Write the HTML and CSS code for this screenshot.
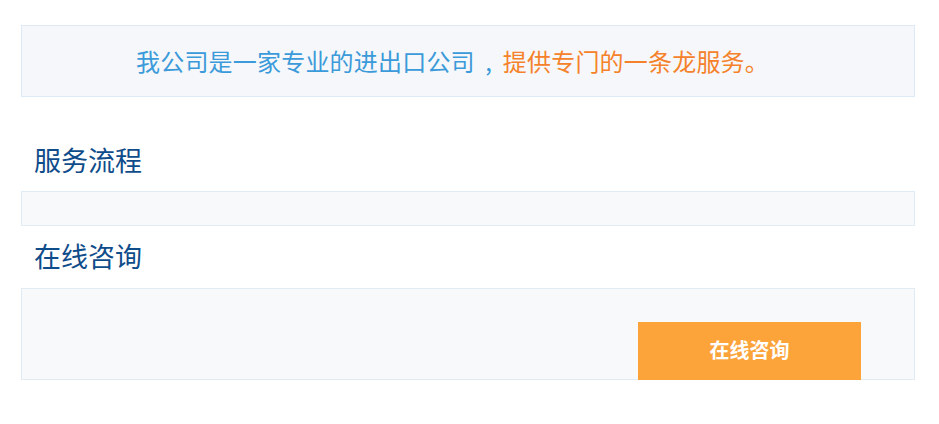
FILE: index.html
```html
<!DOCTYPE html>
<html lang="zh-CN">
<head>
    <meta charset="UTF-8">
    <meta name="viewport" content="width=device-width, initial-scale=1.0">
    <title>服务流程</title>
    <link rel="stylesheet" href="styles.css">
</head>
<body>
    <div class="page">
        <!-- Intro banner -->
        <div class="intro">
            <span class="intro-blue">我公司是一家专业的进出口公司<span class="comma">,</span></span><span class="intro-orange">提供专门的一条龙服务。</span>
        </div>

        <h2 class="section-title first">服务流程</h2>
        <div class="panel panel-flow"></div>

        <h2 class="section-title">在线咨询</h2>
        <div class="panel panel-consult">
            <button class="consult-btn">在线咨询</button>
        </div>
    </div>
</body>
</html>
```

FILE: styles.css
```css
/* General styles */
body {
    margin: 0;
    background-color: #ffffff;
    font-family: "Noto Sans CJK SC", "Noto Sans", sans-serif;
}

.page {
    width: 894px;
    margin-left: 21px;
    padding-top: 25px;
}

/* Intro banner */
.intro {
    height: 70px;
    line-height: 70px;
    background-color: #f5f7fa;
    border: 1px solid #dde9f4;
    text-align: center;
    padding-right: 31px;
    font-size: 24px;
    letter-spacing: 0.2px;
}

.intro-blue {
    color: #3b9ad9;
}

.intro-orange {
    color: #f5822a;
}

.comma {
    display: inline-block;
    width: 28px;
    text-align: center;
}

/* Section headings */
.section-title {
    margin: 12px 0 14px;
    padding-left: 13px;
    font-size: 27px;
    font-weight: normal;
    line-height: 36px;
    color: #0f4c8a;
}

.section-title.first {
    margin-top: 45px;
    margin-bottom: 13px;
}

.panel {
    background-color: #f8f9fb;
    border: 1px solid #e1ebf4;
}

.panel-flow {
    height: 33px;
}

.panel-consult {
    height: 90px;
    display: flex;
    justify-content: flex-end;
    align-items: flex-end;
}

.consult-btn {
    width: 223px;
    height: 58px;
    margin-right: 53px;
    margin-bottom: -1px;
    padding: 0 0 4px;
    border: none;
    background-color: #fca33a;
    color: #ffffff;
    font-family: "Noto Sans CJK SC", sans-serif;
    font-size: 20px;
    font-weight: bold;
    cursor: pointer;
}
```
